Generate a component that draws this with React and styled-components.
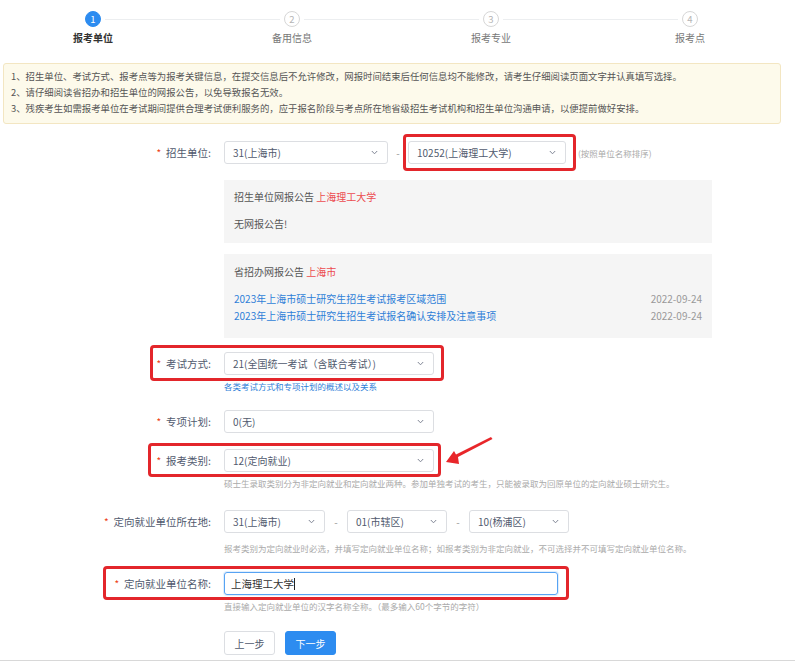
import React from "react";
import styled, { createGlobalStyle } from "styled-components";

const GlobalStyle = createGlobalStyle`
  html, body {
    margin: 0;
    padding: 0;
    background: #fff;
  }
  body {
    font-family: "Noto Sans CJK SC", "Noto Sans", sans-serif;
    color: #515a6e;
  }
`;

const steps = ["报考单位", "备用信息", "报考专业", "报考点"];

const notices = [
  "1、招生单位、考试方式、报考点等为报考关键信息，在提交信息后不允许修改，网报时间结束后任何信息均不能修改，请考生仔细阅读页面文字并认真填写选择。",
  "2、请仔细阅读省招办和招生单位的网报公告，以免导致报名无效。",
  "3、残疾考生如需报考单位在考试期间提供合理考试便利服务的，应于报名阶段与考点所在地省级招生考试机构和招生单位沟通申请，以便提前做好安排。",
];

const Chevron = () => (
  <svg width="7" height="5" viewBox="0 0 7 5">
    <polyline points="0.8,1 3.5,3.8 6.2,1" fill="none" stroke="#808695" strokeWidth="1" />
  </svg>
);

const Select = ({ value, width }) => (
  <SelectBox $width={width}>
    <span>{value}</span>
    <Chevron />
  </SelectBox>
);

const App = () => {
  return (
    <Page>
      <GlobalStyle />
      <Steps>
        {steps.map((s, i) => (
          <React.Fragment key={s}>
            {i > 0 && <StepLine />}
            <Step>
              <StepCircle $active={i === 0}>{i + 1}</StepCircle>
              <StepLabel $active={i === 0}>{s}</StepLabel>
            </Step>
          </React.Fragment>
        ))}
      </Steps>

      <Notice>
        {notices.map((n) => (
          <p key={n}>{n}</p>
        ))}
      </Notice>

      <Form>
        <Row $top={17}>
          <Label>招生单位:</Label>
          <Select value="31(上海市)" width={164} />
          <Dash>-</Dash>
          <Marked>
            <Select value="10252(上海理工大学)" width={158} />
            <Mark $l={-5} $r={-10} $t={-7} $b={-7} />
          </Marked>
          <SideHint>(按照单位名称排序)</SideHint>
        </Row>

        <Board $top={16} $pt={10} $pb={12}>
          <BoardTitle>
            招生单位网报公告 <Red>上海理工大学</Red>
          </BoardTitle>
          <BoardText>无网报公告!</BoardText>
        </Board>

        <Board $top={11} $pt={11} $pb={14}>
          <BoardTitle>
            省招办网报公告 <Red>上海市</Red>
          </BoardTitle>
          <NewsList>
            <NewsItem>
              <a>2023年上海市硕士研究生招生考试报考区域范围</a>
              <span>2022-09-24</span>
            </NewsItem>
            <NewsItem>
              <a>2023年上海市硕士研究生招生考试报名确认安排及注意事项</a>
              <span>2022-09-24</span>
            </NewsItem>
          </NewsList>
        </Board>

        <Row $top={14}>
          <Mark $l={150} $w={294} $t={-7} $b={-6} />
          <Label>考试方式:</Label>
          <Select value="21(全国统一考试（含联合考试）)" width={210} />
        </Row>
        <Hint $link>各类考试方式和专项计划的概述以及关系</Hint>

        <Row $top={18}>
          <Label>专项计划:</Label>
          <Select value="0(无)" width={210} />
        </Row>

        <Row $top={16}>
          <Mark $l={148} $w={293} $t={-6} $b={-5} />
          <Label>报考类别:</Label>
          <Select value="12(定向就业)" width={210} />
          <Arrow width="60" height="40" viewBox="0 0 60 40">
            <polygon
              points="6,29 14,18 16,21.5 51,4 52.5,6 18,24 19,31"
              fill="#e8262a"
            />
          </Arrow>
        </Row>
        <Hint>硕士生录取类别分为非定向就业和定向就业两种。参加单独考试的考生，只能被录取为回原单位的定向就业硕士研究生。</Hint>

        <Row $top={21}>
          <Label>定向就业单位所在地:</Label>
          <Select value="31(上海市)" width={101} />
          <Dash $w={22}>-</Dash>
          <Select value="01(市辖区)" width={100} />
          <Dash $w={22}>-</Dash>
          <Select value="10(杨浦区)" width={100} />
        </Row>
        <Hint $top={9}>报考类别为定向就业时必选，并填写定向就业单位名称；如报考类别为非定向就业，不可选择并不可填写定向就业单位名称。</Hint>

        <Row $top={18}>
          <Mark $l={103} $w={466} $t={-6} $b={-5} />
          <Label>定向就业单位名称:</Label>
          <TextInput>
            上海理工大学<Caret />
          </TextInput>
        </Row>
        <Hint>直接输入定向就业单位的汉字名称全称。（最多输入60个字节的字符）</Hint>

        <Buttons>
          <Button>上一步</Button>
          <Button $primary>下一步</Button>
        </Buttons>
      </Form>
      <BottomLine />
    </Page>
  );
};

export default App;

const Page = styled.div`
  width: 795px;
  height: 662px;
  overflow: hidden;
  position: relative;
`;

const Steps = styled.div`
  display: flex;
  align-items: flex-start;
  padding: 11px 97px 0 85px;
  height: 52px;
  box-sizing: border-box;
`;

const Step = styled.div`
  width: 16px;
  display: flex;
  flex-direction: column;
  align-items: center;
`;

const StepCircle = styled.div`
  width: 16px;
  height: 16px;
  box-sizing: border-box;
  border-radius: 50%;
  border: 1px solid ${(p) => (p.$active ? "#2d8cf0" : "#d7d7d7")};
  background: ${(p) => (p.$active ? "#2d8cf0" : "#fff")};
  color: ${(p) => (p.$active ? "#fff" : "#b5b5b5")};
  font-size: 9.5px;
  line-height: 14px;
  text-align: center;
`;

const StepLabel = styled.div`
  margin-top: 4px;
  white-space: nowrap;
  font-size: 10px;
  line-height: 14px;
  color: ${(p) => (p.$active ? "#333" : "#777")};
  font-weight: ${(p) => (p.$active ? 700 : 400)};
`;

const StepLine = styled.div`
  flex: 1;
  height: 1px;
  margin: 8px 4px 0;
  background: #eceef0;
`;

const Notice = styled.div`
  margin: 11px 14px 0 3px;
  padding: 4px 7px 7px;
  background: #fdfaeb;
  border: 1px solid #f3e6c2;
  border-radius: 3px;
  p {
    margin: 0;
    font-size: 9.4px;
    line-height: 16px;
    color: #555;
    white-space: nowrap;
  }
`;

const Form = styled.div`
  display: flex;
  flex-direction: column;
`;

const Row = styled.div`
  position: relative;
  display: flex;
  align-items: center;
  margin-top: ${(p) => p.$top || 0}px;
  height: 23px;
`;

const Label = styled.div`
  width: 224px;
  flex-shrink: 0;
  box-sizing: border-box;
  padding-right: 13px;
  text-align: right;
  font-size: 10.5px;
  color: #515a6e;
  white-space: nowrap;
  &::before {
    content: "*";
    color: #ed4014;
    margin-right: 5px;
    font-size: 10px;
  }
`;

const SelectBox = styled.div`
  width: ${(p) => p.$width}px;
  height: 23px;
  box-sizing: border-box;
  border: 1px solid #dcdee2;
  border-radius: 3px;
  background: #fff;
  display: flex;
  align-items: center;
  justify-content: space-between;
  padding: 0 9px 0 8px;
  font-size: 10px;
  color: #515a6e;
  white-space: nowrap;
`;

const Dash = styled.div`
  width: ${(p) => p.$w || 20}px;
  text-align: center;
  font-size: 10px;
  color: #999;
`;

const Marked = styled.div`
  position: relative;
  display: flex;
`;

const Mark = styled.div`
  position: absolute;
  left: ${(p) => p.$l}px;
  ${(p) => (p.$w ? `width: ${p.$w}px;` : `right: ${p.$r}px;`)}
  top: ${(p) => p.$t}px;
  bottom: ${(p) => p.$b}px;
  border: 3px solid #e3262b;
  border-radius: 4px;
  box-sizing: border-box;
  pointer-events: none;
`;

const SideHint = styled.div`
  margin-left: 12px;
  font-size: 8.5px;
  color: #aaa;
`;

const Board = styled.div`
  margin: ${(p) => p.$top}px 83px 0 224px;
  padding: ${(p) => p.$pt}px 10px ${(p) => p.$pb}px;
  background: #f5f5f5;
  font-size: 10px;
  color: #555;
`;

const BoardTitle = styled.div`
  line-height: 14px;
`;

const BoardText = styled.div`
  line-height: 14px;
  margin-top: 13px;
`;

const Red = styled.span`
  color: #ec4b4f;
`;

const NewsList = styled.div`
  margin-top: 11px;
`;

const NewsItem = styled.div`
  display: flex;
  justify-content: space-between;
  line-height: 17px;
  a {
    color: #2f7fd8;
  }
  span {
    color: #999;
  }
`;

const Hint = styled.div`
  margin: ${(p) => p.$top || 5}px 0 0 224px;
  font-size: 8.5px;
  line-height: 12px;
  color: ${(p) => (p.$link ? "#2f7fd8" : "#aaa")};
  white-space: nowrap;
`;

const Arrow = styled.svg`
  position: absolute;
  left: 440px;
  top: -16px;
`;

const TextInput = styled.div`
  width: 334px;
  height: 23px;
  box-sizing: border-box;
  border: 1px solid #57a3f3;
  border-radius: 3px;
  box-shadow: 0 0 0 1px rgba(45, 140, 240, 0.15);
  display: flex;
  align-items: center;
  padding: 0 6px;
  font-size: 10.5px;
  color: #333;
`;

const Caret = styled.span`
  display: inline-block;
  width: 1px;
  height: 12px;
  background: #222;
`;

const Buttons = styled.div`
  display: flex;
  gap: 10px;
  margin: 19px 0 0 224px;
`;

const Button = styled.div`
  width: 51px;
  height: 24px;
  box-sizing: border-box;
  border-radius: 3px;
  border: 1px solid ${(p) => (p.$primary ? "#2d8cf0" : "#dcdee2")};
  background: ${(p) => (p.$primary ? "#2d8cf0" : "#fff")};
  color: ${(p) => (p.$primary ? "#fff" : "#515a6e")};
  font-size: 10px;
  display: flex;
  align-items: center;
  justify-content: center;
`;

const BottomLine = styled.div`
  position: absolute;
  left: 0;
  right: 0;
  top: 660px;
  height: 1px;
  background: #d8d8d8;
`;
